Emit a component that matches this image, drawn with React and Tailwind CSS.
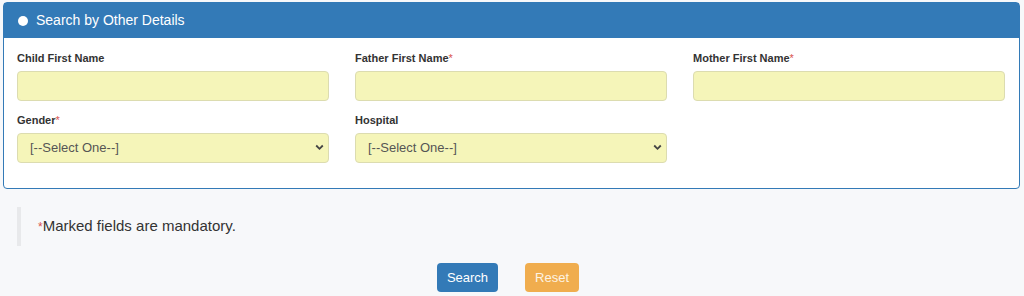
import React from 'react';

const font = { fontFamily: '"Liberation Sans", Arial, sans-serif' };

function Label({ text, required }) {
    return (
        <label className="block text-[11px] font-bold leading-[15px] text-[#333] mb-[5px]">
            {text}
            {required && <span className="text-[#d9534f] font-normal text-[11px]">*</span>}
        </label>
    );
}

function TextField({ label, required }) {
    return (
        <div>
            <Label text={label} required={required} />
            <input
                type="text"
                className="block w-full h-[30px] rounded-[4px] border border-[#dcdcb0] bg-[#f5f5b9] px-3 outline-none"
            />
        </div>
    );
}

function SelectField({ label, required }) {
    return (
        <div>
            <Label text={label} required={required} />
            <div className="relative">
                <select className="block w-full h-[30px] appearance-none rounded-[4px] border border-[#dcdcb0] bg-[#f5f5b9] pl-[12px] text-[13px] text-[#555] outline-none">
                    <option>[--Select One--]</option>
                </select>
                <svg className="absolute right-[5px] top-[11px] pointer-events-none" width="9" height="7" viewBox="0 0 9 7">
                    <path d="M1.2 1.5 L4.5 4.8 L7.8 1.5" fill="none" stroke="#444" strokeWidth="1.8" />
                </svg>
            </div>
        </div>
    );
}

export default function App() {
    return (
        <div className="w-[1024px] h-[296px] bg-[#f7f8fa] overflow-hidden pt-[2px]" style={font}>
            {/* Search panel */}
            <div className="ml-[3px] mr-[4px] border border-[#337ab7] rounded-[4px] bg-white">
                <div className="h-[35px] bg-[#337ab7] flex items-center pl-[14px] text-white">
                    <span className="w-[10px] h-[10px] rounded-full bg-white mr-[8px]" />
                    <span className="text-[14px]">Search by Other Details</span>
                </div>
                <div className="pl-[13px] pr-[14px] pt-[13px] pb-[25px]">
                    <div className="grid grid-cols-3 gap-x-[26px] gap-y-[12px]">
                        <TextField label="Child First Name" />
                        <TextField label="Father First Name" required />
                        <TextField label="Mother First Name" required />
                        <SelectField label="Gender" required />
                        <SelectField label="Hospital" />
                    </div>
                </div>
            </div>

            {/* Note */}
            <div className="mt-[18px] ml-[17px] border-l-[4px] border-[#e8e9eb] pl-[17px] py-[8px]">
                <p className="text-[15px] leading-[22px] text-[#333]">
                    <span className="text-[#d9534f] text-[12px]">*</span>Marked fields are mandatory.
                </p>
            </div>

            {/* Actions */}
            <div className="mt-[17px] flex justify-center gap-[27px] pr-[8px]">
                <button className="h-[29px] px-[10px] rounded-[4px] bg-[#337ab7] text-white text-[13px]">Search</button>
                <button className="h-[29px] px-[10px] rounded-[4px] bg-[#f0ad4e] text-[#fdf3e3] text-[13px]">Reset</button>
            </div>
        </div>
    );
}
